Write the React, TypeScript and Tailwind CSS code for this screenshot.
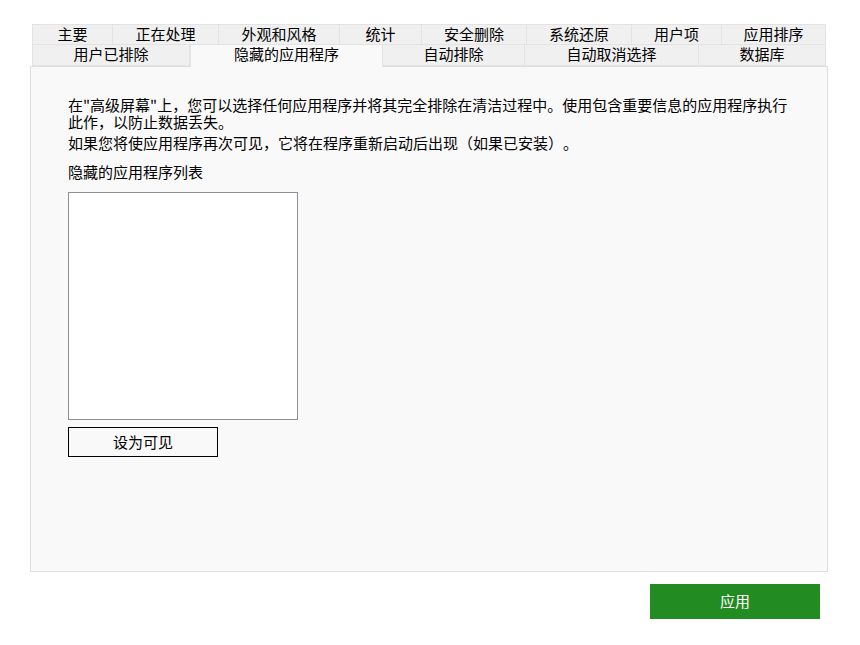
import React from "react";

const row1 = [
  { label: "主要", w: 81 },
  { label: "正在处理", w: 106 },
  { label: "外观和风格", w: 121 },
  { label: "统计", w: 82 },
  { label: "安全删除", w: 105 },
  { label: "系统还原", w: 105 },
  { label: "用户项", w: 90 },
  { label: "应用排序", w: 104 },
];

const row2 = [
  { label: "用户已排除", w: 158 },
  { label: "隐藏的应用程序", w: 193, active: true },
  { label: "自动排除", w: 142 },
  { label: "自动取消选择", w: 174 },
  { label: "数据库", w: 127 },
];

export default function App() {
  return (
    <div
      className="w-[860px] h-[645px] bg-white text-black text-[15px] leading-[17px] [text-spacing-trim:space-all]"
      style={{ fontFamily: '"Noto Sans CJK SC", "Noto Sans", sans-serif' }}
    >
      <div className="pt-[24px] pl-[30px]">
        <div className="ml-[2px] flex h-[21px]">
          {row1.map((t, i) => (
            <div
              key={t.label}
              style={{ width: t.w }}
              className={`h-[21px] pb-[3px] flex items-center justify-center bg-[#f0f0f0] border-t border-b border-r border-[#e3e3e3] ${i === 0 ? "border-l" : ""}`}
            >
              {t.label}
            </div>
          ))}
        </div>
        <div className="ml-[2px] flex h-[21px] relative z-10">
          {row2.map((t, i) =>
            t.active ? (
              <div
                key={t.label}
                style={{ width: t.w }}
                className="h-[23px] -mt-[1px] flex items-start justify-center bg-[#f9f9f9] border-l border-r border-t border-[#e3e3e3]"
              >
                {t.label}
              </div>
            ) : (
              <div
                key={t.label}
                style={{ width: t.w }}
                className={`h-[21px] pb-[3px] flex items-center justify-center bg-[#f0f0f0] border-b border-r border-[#e3e3e3] ${i === 0 ? "border-l" : ""}`}
              >
                {t.label}
              </div>
            )
          )}
        </div>
        <div className="w-[798px] h-[506px] bg-[#f9f9f9] border border-[#dedede] pt-[29px] pl-[37px]">
          <p className="w-[724px]">
            在"高级屏幕"上，您可以选择任何应用程序并将其完全排除在清洁过程中。使用包含重要信息的应用程序执行此作，以防止数据丢失。
          </p>
          <p className="mt-[4px]">
            如果您将使应用程序再次可见，它将在程序重新启动后出现（如果已安装）。
          </p>
          <p className="mt-[12px]">隐藏的应用程序列表</p>
          <div className="mt-[12px] w-[230px] h-[228px] bg-white border border-[#8c8f96]" />
          <button className="mt-[7px] w-[150px] h-[30px] pb-[2px] border border-black bg-[#f9f9f9] flex items-center justify-center">
            设为可见
          </button>
        </div>
      </div>
      <div className="flex justify-end pr-[40px] mt-[12px]">
        <button className="w-[170px] h-[35px] pb-[3px] bg-[#228b22] text-white flex items-center justify-center">
          应用
        </button>
      </div>
    </div>
  );
}
